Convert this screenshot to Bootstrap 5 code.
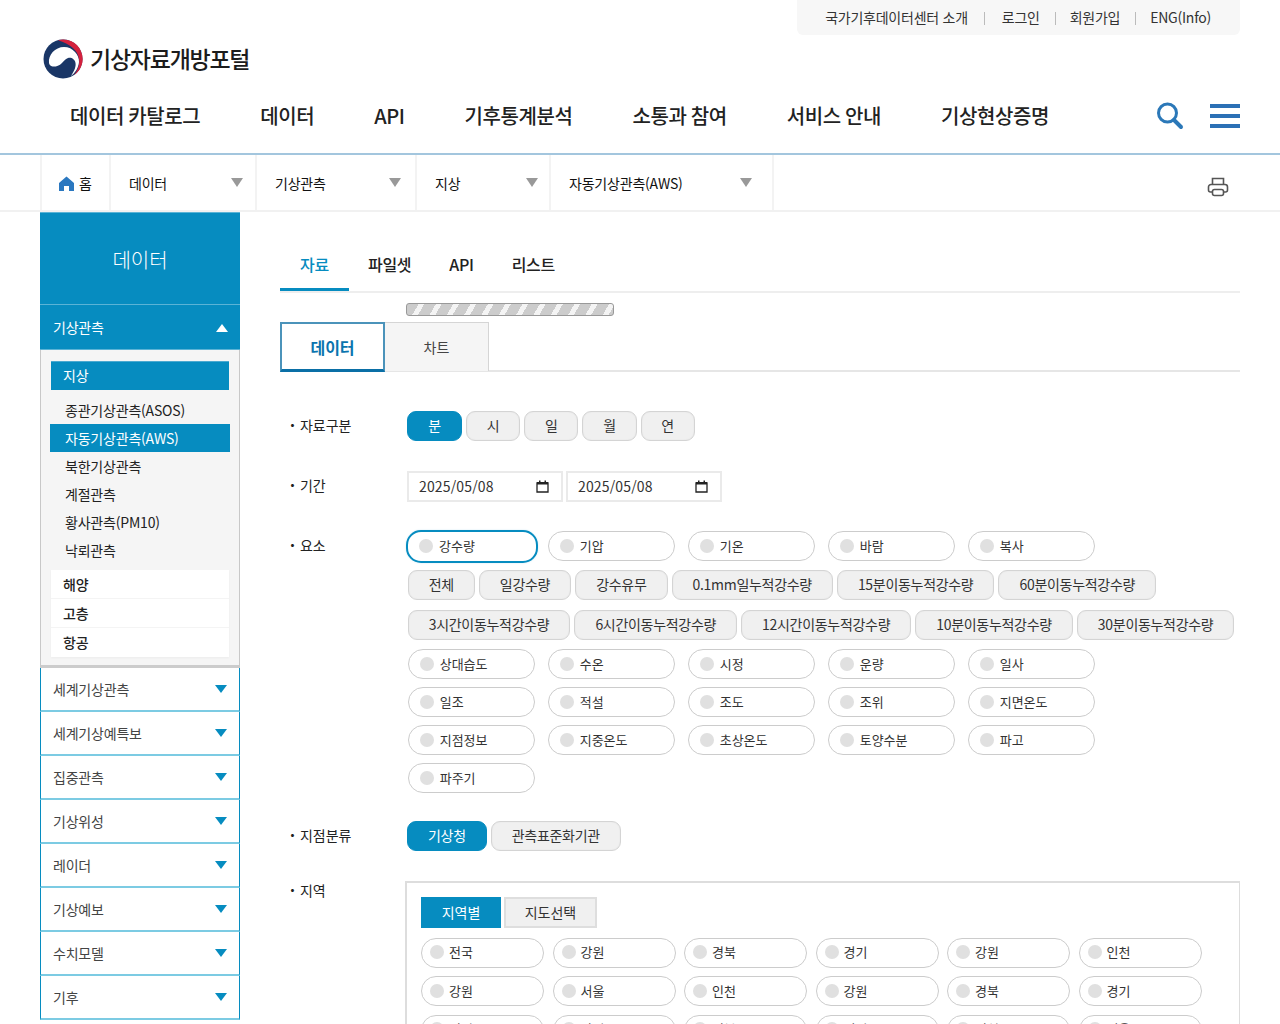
<!DOCTYPE html>
<html lang="ko">
<head>
<meta charset="utf-8">
<title>기상자료개방포털</title>
<link href="https://cdn.jsdelivr.net/npm/bootstrap@5.3.0/dist/css/bootstrap.min.css" rel="stylesheet">
<style>
html,body{height:1024px;overflow:hidden}
body{font-family:"Noto Sans CJK KR","Noto Sans",sans-serif;font-size:14px;color:#222;background:#fff}
a{color:inherit;text-decoration:none}
.wrap-x{width:1200px;margin:0 auto}
.util-bar{height:35px;width:443px;background:#f7f7f7;border-radius:0 0 6px 6px;padding-right:29px;font-size:14px;color:#333;letter-spacing:-.25px}
.util-bar a+a{margin-left:15px;padding-left:15px;position:relative}
.util-bar a+a::before{content:"";position:absolute;left:0;top:5px;height:13px;width:1px;background:#bbb}
.util-bar a:nth-child(2){margin-left:16px;padding-left:18px}
.logo-row{height:60px;padding-left:3px;padding-top:4px}
.logo-txt{font-size:23px;font-weight:500;color:#1c1c1c;margin-left:7px;letter-spacing:-1.25px;line-height:38px}
.gnb{height:58px;padding-bottom:16px}
.gnb a{font-size:20px;font-weight:500;color:#222;padding:0 30px;letter-spacing:-.4px;word-spacing:-1px;line-height:28px}
.gnb-icons{gap:26px}
.hdr-line{border-bottom:2px solid #a3c6de}
.crumbs{height:57px;border-bottom:2px solid #f1f1f1}
.crumb{border-right:2px solid #f3f3f3;height:55px;padding:2px 12px 0 18px;font-size:14px;color:#111;letter-spacing:-.2px}
.crumb-home{width:71px;padding:2px 0 0 17px;border-left:2px solid #f3f3f3;gap:5px}
.crumb-a{width:146px}.crumb-b{width:160px;padding-right:14px}.crumb-c{width:134px;padding-right:11px}.crumb-d{width:223px;padding-right:20px}
.tri-g{width:0;height:0;border-left:6.5px solid transparent;border-right:6.5px solid transparent;border-top:9px solid #999;margin-top:-2px}
.print-ic{padding-top:8px;padding-right:11px}
.side{width:200px;flex:none;letter-spacing:-.2px}
.side-head{height:93px;background:#068cc0;border-top:1px solid #5ab3d6;border-bottom:1px solid #5ab3d6;color:#fff;font-size:20px;font-weight:300;padding-top:2px;letter-spacing:0}
.side-open{height:45px;background:#068cc0;color:#fff;padding:0 12px 0 13px;border-bottom:1px solid #5ab3d6}
.tri-up{width:0;height:0;border-left:6.5px solid transparent;border-right:6.5px solid transparent;border-bottom:8px solid #fff;margin-top:2px}
.tri-dn{width:0;height:0;border-left:6.5px solid transparent;border-right:6.5px solid transparent;border-top:8px solid #068cc0}
.side-panel{height:318px;background:#f5f5f5;border:1px solid #c8c8c8;border-top:0;border-bottom:3px solid #ccc;padding:11px 10px 0 10px}
.sub-act{height:29px;width:178px;background:#068cc0;color:#fff;padding-left:12px;line-height:27px;border-top:1px solid #4ba9d0}
.leafs{margin:6px -1px 0;padding:0}
.leafs li{height:28px;line-height:28px;padding-left:15px;color:#222}
.leafs li.on{background:#068cc0;color:#fff}
.subs-w{background:#fff;width:178px;margin-top:6px;height:87px;padding:0;box-shadow:0 1px 2px rgba(0,0,0,.04)}
.subs-w li{height:29px;line-height:28px;padding-left:12px;border-bottom:1px solid #f4f4f4;font-weight:500}
.subs-w li:last-child{border-bottom:0}
.side-item{height:44px;border:solid #068cc0;border-width:0 1px;border-bottom:2px solid #7ccbe3;padding:0 12px;color:#444}
.main-col{width:960px;margin-left:40px;padding-top:29px}
.tabs-a{border-bottom:2px solid #eee;height:52px}
.tabs-a a{height:50px;line-height:47px;padding:0 19px;font-size:16px;font-weight:500;color:#222;letter-spacing:-.3px}
.tabs-a a.on{color:#068cc0;border-bottom:3px solid #068cc0;height:50px;padding:0 20px;width:69px}
.loader{margin:10px 0 6px 126px;width:208px;height:13px;border:1px solid #999;border-radius:3px;background:repeating-linear-gradient(120deg,#ccc 0 10px,#f4f4f4 10px 15px)}
.tabs-b{border-bottom:2px solid #e6e6e6;height:50px}
.tabs-b a{display:flex;align-items:center;justify-content:center;height:49px;width:104px;background:#f5f5f5;border:1px solid #d5d5d5;border-left:0;border-bottom:0;color:#444}
.tabs-b a.on{width:105px;background:#fff;border:2px solid #4b93ba;border-bottom:3px solid #0a6fa6;height:50px;color:#0a74ae;font-size:16px;font-weight:700}
.frm{display:flex}
.frm-lb{width:127px;flex:none;padding-left:10px;line-height:28px;color:#222}
.frm-lb::before{content:"·";font-weight:900;margin-right:5px}
.lb-up{margin-top:-5px}
.r1{margin-top:39px}.r2{margin-top:30px}.r3{margin-top:29px}.r4{margin-top:28px}.r5{margin-top:30px}
.btn-g{height:30px;border:1px solid #d4d4d4;background:#f0f0f0;border-radius:9px;color:#333;padding:0 20px;font-size:14px;line-height:26px;white-space:nowrap;letter-spacing:-.3px;box-shadow:inset 0 0 2px rgba(0,0,0,.06)}
.btn-g.on{background:#068cc0;border-color:#068cc0;color:#fff;box-shadow:none}
.w-cell{width:54.2px;padding:0;text-align:center}
.w-cell.on{width:55px}
.date-f{width:156px;height:31px;border:2px solid #eaeaea;padding:0 12px 0 10px;color:#333;letter-spacing:.15px;font-size:14px}
.el-col{width:832px;margin-left:.7px}
.radio-r{height:30px;gap:12.5px}
.rad{height:30px;width:127.5px;border:1px solid #ccc;border-radius:15px;padding-left:11px;gap:6px;color:#333;background:#fff;font-size:13px}
.rad i{display:block;width:14px;height:14px;border-radius:50%;background:#e0e0e0;flex:none}
.rad.focus-r{border:2px solid #068cc0;width:131.500px;height:33px;margin:-1.5px -2.3px -1.5px -1.7px;padding-left:11px;box-shadow:0 0 2px #cfe8f3}
.btn-rows{row-gap:10px;column-gap:4px;margin:9px 0 9px 0;width:832px}
.stack-r{row-gap:8px}
.area-box{width:835px;margin-left:-2px;height:200px;border:solid #ddd;border-width:2px 1px 0 2px;padding:14px 14px 0 14px}
.ar-on{width:80px;height:31px;background:#068cc0;color:#fff;line-height:30px;text-align:center}
.ar-off{width:93px;height:31px;background:#f0f0f0;border:2px solid #dedede;line-height:27px;text-align:center;margin-left:3px;color:#333}
.area-r{gap:8.5px;height:30px;margin-top:9.500px}
.area-r .rad{width:123px;height:30px;padding:0 0 1px 8px;gap:5px}
.area-r2{margin-top:8.500px}
</style>
</head>
<body>
<header class="hdr-line">
  <div class="wrap-x">
    <div class="d-flex justify-content-end">
      <nav class="util-bar d-flex align-items-center justify-content-end">
        <a href="#">국가기후데이터센터 소개</a><a href="#">로그인</a><a href="#">회원가입</a><a href="#">ENG(Info)</a>
      </nav>
    </div>
    <div class="logo-row d-flex align-items-start">
      <svg width="40" height="40" viewBox="0 0 40 40" aria-hidden="true">
        <circle cx="20" cy="20" r="19.5" fill="#1a3666"/>
        <path d="M6 24C5 16 12 8 21 8C30 8 36.5 16 36 23C35.500 29 32 34 28 37C32 31 33 27 32.500 24C32 20 28 18 25 19C22 20 21 22 19 24C16 27 12 28 9.500 27.500C7.500 27 6.300 26 6 24Z" fill="#fff"/>
        <path d="M15 1.200A19.500 19.500 0 0 1 31 36.200C35 31 37 25 36 20C35 11 27 5 15 1.200Z" fill="#d4213d"/>
      </svg>
      <span class="logo-txt">기상자료개방포털</span>
    </div>
    <div class="gnb d-flex align-items-center justify-content-between">
      <nav class="d-flex">
        <a href="#">데이터 카탈로그</a><a href="#">데이터</a><a href="#">API</a><a href="#">기후통계분석</a><a href="#">소통과 참여</a><a href="#">서비스 안내</a><a href="#">기상현상증명</a>
      </nav>
      <div class="gnb-icons d-flex align-items-center">
        <svg width="28" height="30" viewBox="0 0 28 30" aria-label="검색"><circle cx="11.500" cy="12" r="9" fill="none" stroke="#2b78b8" stroke-width="3"/><path d="M18 19l7 7" stroke="#2b78b8" stroke-width="4" stroke-linecap="round"/></svg>
        <svg width="30" height="26" viewBox="0 0 30 26" aria-label="메뉴"><path d="M0 1h30v4H0zM0 11h30v4H0zM0 21h30v4H0z" fill="#2b70b5"/></svg>
      </div>
    </div>
  </div>
</header>
<div class="crumbs">
  <div class="wrap-x d-flex justify-content-between">
    <div class="d-flex">
      <a href="#" class="crumb crumb-home d-flex align-items-center">
        <svg width="15" height="15" viewBox="0 0 15 15" aria-hidden="true"><path d="M7.500 0.500L15 7v8h-5V10H5v5H0V7z" fill="#2b78c0"/></svg>홈</a>
      <a href="#" class="crumb crumb-a d-flex align-items-center justify-content-between">데이터<span class="tri-g"></span></a>
      <a href="#" class="crumb crumb-b d-flex align-items-center justify-content-between">기상관측<span class="tri-g"></span></a>
      <a href="#" class="crumb crumb-c d-flex align-items-center justify-content-between">지상<span class="tri-g"></span></a>
      <a href="#" class="crumb crumb-d d-flex align-items-center justify-content-between">자동기상관측(AWS)<span class="tri-g"></span></a>
    </div>
    <div class="print-ic d-flex align-items-center">
      <svg width="22" height="20" viewBox="0 0 22 20" aria-label="인쇄" fill="none" stroke="#555" stroke-width="1.600"><path d="M5.500 8V1.500h11V8"/><path d="M5 15H3.500A2 2 0 0 1 1.500 13V10A2.500 2.500 0 0 1 4 7.500h14A2.500 2.500 0 0 1 20.500 10v3A2 2 0 0 1 18.500 15H17"/><rect x="5.500" y="12.500" width="11" height="6" rx="2"/></svg>
    </div>
  </div>
</div>
<div class="wrap-x d-flex">
  <aside class="side">
    <div class="side-head d-flex align-items-center justify-content-center">데이터</div>
    <a href="#" class="side-open d-flex align-items-center justify-content-between">기상관측<span class="tri-up"></span></a>
    <div class="side-panel">
      <div class="sub-act">지상</div>
      <ul class="leafs list-unstyled">
        <li>종관기상관측(ASOS)</li><li class="on">자동기상관측(AWS)</li><li>북한기상관측</li><li>계절관측</li><li>황사관측(PM10)</li><li>낙뢰관측</li>
      </ul>
      <ul class="subs-w list-unstyled">
        <li>해양</li><li>고층</li><li>항공</li>
      </ul>
    </div>
    <a href="#" class="side-item d-flex align-items-center justify-content-between">세계기상관측<span class="tri-dn"></span></a>
    <a href="#" class="side-item d-flex align-items-center justify-content-between">세계기상예특보<span class="tri-dn"></span></a>
    <a href="#" class="side-item d-flex align-items-center justify-content-between">집중관측<span class="tri-dn"></span></a>
    <a href="#" class="side-item d-flex align-items-center justify-content-between">기상위성<span class="tri-dn"></span></a>
    <a href="#" class="side-item d-flex align-items-center justify-content-between">레이더<span class="tri-dn"></span></a>
    <a href="#" class="side-item d-flex align-items-center justify-content-between">기상예보<span class="tri-dn"></span></a>
    <a href="#" class="side-item d-flex align-items-center justify-content-between">수치모델<span class="tri-dn"></span></a>
    <a href="#" class="side-item d-flex align-items-center justify-content-between">기후<span class="tri-dn"></span></a>
  </aside>
  <main class="main-col">
    <div class="tabs-a d-flex">
      <a href="#" class="on">자료</a><a href="#">파일셋</a><a href="#">API</a><a href="#">리스트</a>
    </div>
    <div class="loader"></div>
    <div class="tabs-b d-flex">
      <a href="#" class="on">데이터</a><a href="#">차트</a>
    </div>
    <div class="frm r1">
      <div class="frm-lb">자료구분</div>
      <div class="d-flex gap-1">
        <span class="btn-g w-cell on">분</span><span class="btn-g w-cell">시</span><span class="btn-g w-cell">일</span><span class="btn-g w-cell">월</span><span class="btn-g w-cell">연</span>
      </div>
    </div>
    <div class="frm r2">
      <div class="frm-lb">기간</div>
      <div class="d-flex" style="gap:3px">
        <div class="date-f d-flex align-items-center justify-content-between">2025/05/08<svg width="13" height="13" viewBox="0 0 13 13" aria-hidden="true"><path d="M1 3h11v9H1z" fill="none" stroke="#222" stroke-width="1.300"/><path d="M1 2h11v2.500H1zM3 .5h1.500V3H3zM8.500.5H10V3H8.500z" fill="#222"/></svg></div>
        <div class="date-f d-flex align-items-center justify-content-between">2025/05/08<svg width="13" height="13" viewBox="0 0 13 13" aria-hidden="true"><path d="M1 3h11v9H1z" fill="none" stroke="#222" stroke-width="1.300"/><path d="M1 2h11v2.500H1zM3 .5h1.500V3H3zM8.500.5H10V3H8.500z" fill="#222"/></svg></div>
      </div>
    </div>
    <div class="frm r3">
      <div class="frm-lb">요소</div>
      <div class="el-col">
        <div class="radio-r d-flex">
          <label class="rad focus-r d-flex align-items-center"><i></i>강수량</label>
          <label class="rad d-flex align-items-center"><i></i>기압</label>
          <label class="rad d-flex align-items-center"><i></i>기온</label>
          <label class="rad d-flex align-items-center"><i></i>바람</label>
          <label class="rad d-flex align-items-center"><i></i>복사</label>
        </div>
        <div class="btn-rows d-flex flex-wrap">
          <span class="btn-g">전체</span><span class="btn-g">일강수량</span><span class="btn-g">강수유무</span><span class="btn-g">0.1mm일누적강수량</span><span class="btn-g">15분이동누적강수량</span><span class="btn-g">60분이동누적강수량</span>
          <span class="btn-g">3시간이동누적강수량</span><span class="btn-g">6시간이동누적강수량</span><span class="btn-g">12시간이동누적강수량</span><span class="btn-g">10분이동누적강수량</span><span class="btn-g">30분이동누적강수량</span>
        </div>
        <div class="stack-r d-flex flex-column">
          <div class="radio-r d-flex">
            <label class="rad d-flex align-items-center"><i></i>상대습도</label>
            <label class="rad d-flex align-items-center"><i></i>수온</label>
            <label class="rad d-flex align-items-center"><i></i>시정</label>
            <label class="rad d-flex align-items-center"><i></i>운량</label>
            <label class="rad d-flex align-items-center"><i></i>일사</label>
          </div>
          <div class="radio-r d-flex">
            <label class="rad d-flex align-items-center"><i></i>일조</label>
            <label class="rad d-flex align-items-center"><i></i>적설</label>
            <label class="rad d-flex align-items-center"><i></i>조도</label>
            <label class="rad d-flex align-items-center"><i></i>조위</label>
            <label class="rad d-flex align-items-center"><i></i>지면온도</label>
          </div>
          <div class="radio-r d-flex">
            <label class="rad d-flex align-items-center"><i></i>지점정보</label>
            <label class="rad d-flex align-items-center"><i></i>지중온도</label>
            <label class="rad d-flex align-items-center"><i></i>초상온도</label>
            <label class="rad d-flex align-items-center"><i></i>토양수분</label>
            <label class="rad d-flex align-items-center"><i></i>파고</label>
          </div>
          <div class="radio-r d-flex">
            <label class="rad d-flex align-items-center"><i></i>파주기</label>
          </div>
        </div>
      </div>
    </div>
    <div class="frm r4">
      <div class="frm-lb">지점분류</div>
      <div class="d-flex gap-1">
        <span class="btn-g on">기상청</span><span class="btn-g">관측표준화기관</span>
      </div>
    </div>
    <div class="frm r5">
      <div class="frm-lb lb-up">지역</div>
      <div class="area-box">
        <div class="d-flex"><div class="ar-on">지역별</div><div class="ar-off">지도선택</div></div>
        <div class="area-r d-flex">
          <label class="rad d-flex align-items-center"><i></i>전국</label>
          <label class="rad d-flex align-items-center"><i></i>강원</label>
          <label class="rad d-flex align-items-center"><i></i>경북</label>
          <label class="rad d-flex align-items-center"><i></i>경기</label>
          <label class="rad d-flex align-items-center"><i></i>강원</label>
          <label class="rad d-flex align-items-center"><i></i>인천</label>
        </div>
        <div class="area-r area-r2 d-flex">
          <label class="rad d-flex align-items-center"><i></i>강원</label>
          <label class="rad d-flex align-items-center"><i></i>서울</label>
          <label class="rad d-flex align-items-center"><i></i>인천</label>
          <label class="rad d-flex align-items-center"><i></i>강원</label>
          <label class="rad d-flex align-items-center"><i></i>경북</label>
          <label class="rad d-flex align-items-center"><i></i>경기</label>
        </div>
        <div class="area-r area-r2 d-flex">
          <label class="rad d-flex align-items-center"><i></i>경기</label>
          <label class="rad d-flex align-items-center"><i></i>강원</label>
          <label class="rad d-flex align-items-center"><i></i>경북</label>
          <label class="rad d-flex align-items-center"><i></i>경기</label>
          <label class="rad d-flex align-items-center"><i></i>인천</label>
          <label class="rad d-flex align-items-center"><i></i>서울</label>
        </div>
      </div>
    </div>
  </main>
</div>
<script src="https://cdn.jsdelivr.net/npm/bootstrap@5.3.0/dist/js/bootstrap.bundle.min.js"></script>
</body>
</html>
